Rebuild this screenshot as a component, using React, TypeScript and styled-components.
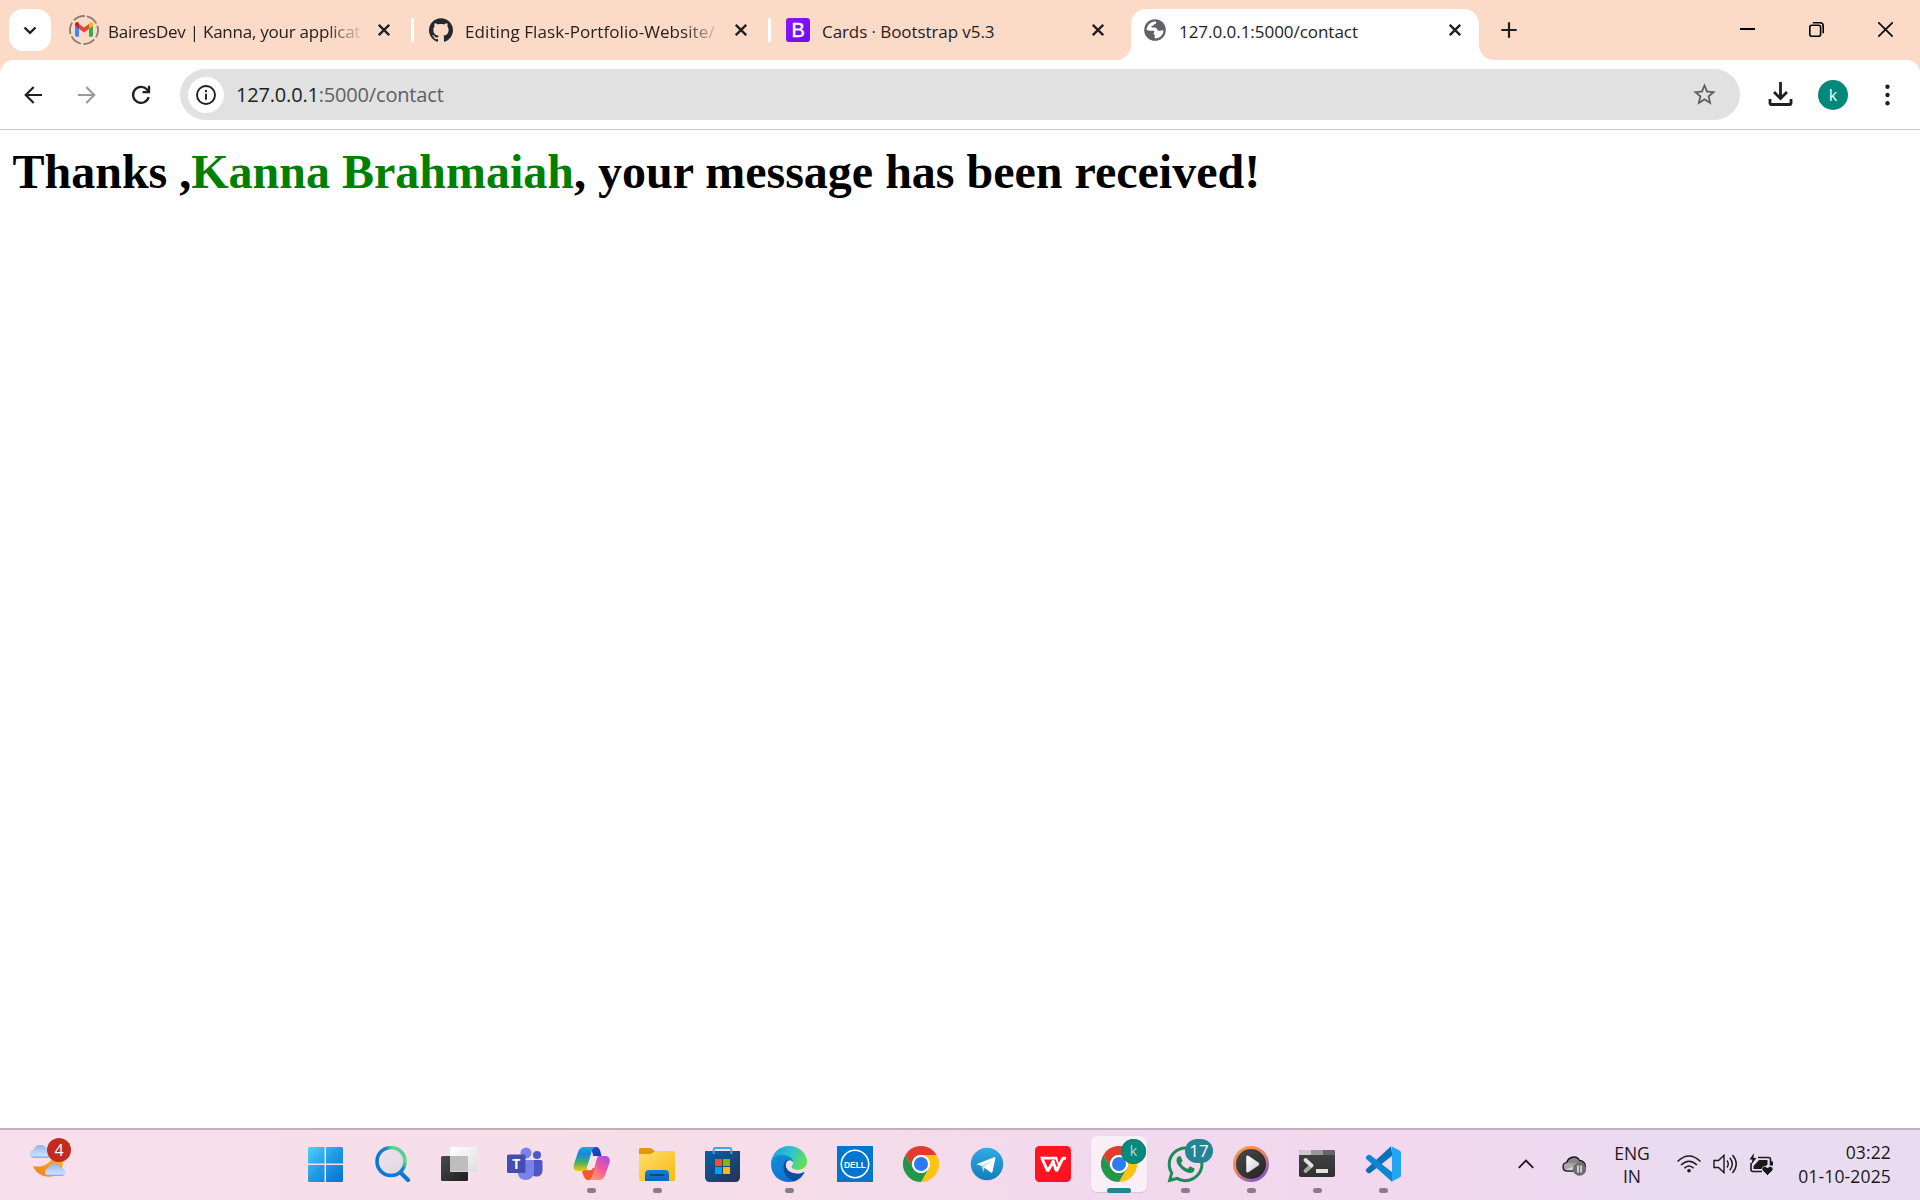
import React from 'react';
import styled, { createGlobalStyle } from 'styled-components';
import { SiGithub } from 'react-icons/si';
import { MdStarBorder } from 'react-icons/md';
import { FaWhatsapp } from 'react-icons/fa';

const UI_FONT = '"Open Sans", "Noto Sans", sans-serif';

const GlobalStyle = createGlobalStyle`
  * { box-sizing: border-box; }
  html, body { margin: 0; padding: 0; background: #fff; }
  body { overflow: hidden; }
  svg { display: block; flex: none; }
`;

const Screen = styled.div`
  display: flex;
  flex-direction: column;
  width: 1920px;
  height: 1200px;
  background: #fff;
  font-family: ${UI_FONT};
  overflow: hidden;
`;

/* ---------- tab strip ---------- */

const TabStrip = styled.header`
  display: flex;
  align-items: flex-end;
  flex: none;
  height: 60px;
  padding-left: 9px;
  background: #fcdac8;
`;

const TabSearch = styled.button`
  display: flex;
  align-items: center;
  justify-content: center;
  width: 42px;
  height: 42px;
  margin: 0 3px 9px 0;
  padding: 0;
  border: 0;
  border-radius: 14px;
  background: #fff;
`;

const TabItem = styled.div<{ $active?: boolean }>`
  position: relative;
  display: flex;
  align-items: center;
  flex: none;
  height: 51px;
  width: ${(p) => (p.$active ? 348 : 357)}px;
  margin: ${(p) => (p.$active ? '0 6px' : '0')};
  padding-left: ${(p) => (p.$active ? 9 : 15)}px;
  padding-bottom: 9px;
  border-radius: 15px 15px 0 0;
  background: ${(p) => (p.$active ? '#fff' : 'transparent')};

  &::before,
  &::after {
    content: '';
    display: ${(p) => (p.$active ? 'block' : 'none')};
    position: absolute;
    bottom: 0;
    width: 15px;
    height: 15px;
  }
  &::before {
    left: -15px;
    background: radial-gradient(circle at 0 0, transparent 14.5px, #fff 15.5px);
  }
  &::after {
    right: -15px;
    background: radial-gradient(circle at 100% 0, transparent 14.5px, #fff 15.5px);
  }
`;

const TabDivider = styled.span`
  width: 3px;
  height: 24px;
  margin-left: -15px;
  margin-right: 12px;
  background: #fff;
`;

const Favicon = styled.span`
  display: flex;
  align-items: center;
  justify-content: center;
  flex: none;
  width: 30px;
  height: 30px;
  margin-right: 9px;
`;

const TabTitle = styled.span<{ $fade?: boolean; $spacing: number }>`
  width: 252px;
  padding-top: 3px;
  white-space: nowrap;
  font-size: 17px;
  line-height: 26px;
  letter-spacing: ${(p) => p.$spacing}px;
  color: #25211f;
  mask-image: ${(p) => (p.$fade ? 'linear-gradient(90deg, #000 218px, transparent 256px)' : 'none')};
`;

const TabClose = styled.span`
  display: flex;
  justify-content: center;
  width: 18px;
  margin-left: 15px;
`;

const NewTab = styled.span`
  display: flex;
  margin: 0 0 22px 16px;
`;

const WindowControls = styled.div`
  display: flex;
  align-items: center;
  align-self: flex-start;
  gap: 54px;
  height: 59px;
  margin-left: auto;
  padding-right: 27px;
`;

/* ---------- toolbar ---------- */

const ToolbarBacking = styled.div`
  flex: none;
  background: #fcdac8;
`;

const Toolbar = styled.nav`
  display: flex;
  align-items: center;
  height: 70px;
  padding-left: 20px;
  border-radius: 14px 14px 0 0;
  border-bottom: 1px solid #c8c8c8;
  background: #fff;
`;

const NavButton = styled.span`
  display: flex;
  justify-content: center;
  width: 26px;
  margin-right: 28px;
`;

const AddressBar = styled.div`
  display: flex;
  align-items: center;
  width: 1560px;
  height: 51px;
  margin-left: -2px;
  padding: 0 22px 0 8px;
  border-radius: 26px;
  background: #e1e1e1;
`;

const SiteInfo = styled.span`
  display: flex;
  align-items: center;
  justify-content: center;
  width: 36px;
  height: 36px;
  margin-right: 12px;
  border-radius: 50%;
  background: #fff;
`;

const Url = styled.span`
  flex: 1;
  padding-top: 1px;
  font-size: 20px;
  line-height: 28px;
  letter-spacing: -0.18px;
  color: #5f6062;
`;

const UrlHost = styled.span`
  color: #202124;
`;

const ToolbarActions = styled.div`
  display: flex;
  align-items: center;
  margin-left: 27.5px;
`;

const Avatar = styled.span`
  display: flex;
  align-items: center;
  justify-content: center;
  width: 30px;
  height: 30px;
  margin: 0 36.5px 0 25.5px;
  border-radius: 50%;
  background: #00897b;
  color: #fff;
  font-size: 16px;
  line-height: 30px;
`;

/* ---------- page ---------- */

const Page = styled.main`
  flex: 1;
  padding: 12px;
  background: #fff;
`;

const Message = styled.h1`
  margin: 3px 0 0 0.5px;
  font-family: "Liberation Serif", "Times New Roman", serif;
  font-size: 48px;
  font-weight: 700;
  line-height: 54px;
  white-space: nowrap;
  color: #000;
`;

const Sender = styled.span`
  color: #008000;
`;

/* ---------- taskbar ---------- */

const Taskbar = styled.footer`
  display: flex;
  flex: none;
  height: 72px;
  border-top: 2px solid #c0b0bb;
  background: linear-gradient(90deg, #f7dfec 0%, #f6dfe9 28%, #f6dde9 42%, #f1d9ee 58%, #f1d8ee 74%, #e9dbf0 88%, #e9dcf0 100%);
`;

const Weather = styled.div`
  position: relative;
  width: 294px;
  padding: 15px 0 0 30px;
`;

const WeatherBadge = styled.span`
  position: absolute;
  left: 47px;
  top: 8px;
  width: 24px;
  height: 24px;
  border-radius: 50%;
  background: #c42b1c;
  color: #fff;
  font-size: 16px;
  line-height: 24px;
  text-align: center;
`;

const Apps = styled.div`
  display: flex;
`;

const AppSlot = styled.div`
  display: flex;
  justify-content: center;
  width: 66px;
  padding-top: 6px;
`;

const AppButton = styled.div<{ $active?: boolean }>`
  position: relative;
  display: flex;
  flex-direction: column;
  align-items: center;
  width: 56px;
  height: 56px;
  padding-top: 10px;
  border-radius: 6px;
  background: ${(p) => (p.$active ? '#faeef7' : 'transparent')};
  box-shadow: ${(p) => (p.$active ? '0 1px 1px 0 #d9c4d6, 0 0 1px #e2cfdf' : 'none')};
`;

const Running = styled.span<{ $active?: boolean }>`
  flex: none;
  width: ${(p) => (p.$active ? 24 : 9)}px;
  height: 5px;
  margin-top: 6px;
  border-radius: 3px;
  background: ${(p) => (p.$active ? '#258494' : '#8c7b88')};
`;

const AppBadge = styled.span<{ $wide?: boolean }>`
  position: absolute;
  left: ${(p) => (p.$wide ? 28 : 30)}px;
  top: 3px;
  width: ${(p) => (p.$wide ? 28 : 25)}px;
  height: ${(p) => (p.$wide ? 24 : 25)}px;
  border-radius: 13px;
  background: ${(p) => (p.$wide ? '#258494' : '#07897b')};
  box-shadow: ${(p) => (p.$wide ? 'none' : 'inset 0 0 0 1px #1b7a70')};
  color: ${(p) => (p.$wide ? '#fff' : '#b6dcd6')};
  font-size: ${(p) => (p.$wide ? 17 : 14)}px;
  line-height: 24px;
  text-align: center;
`;

const Tray = styled.div`
  display: flex;
  align-items: center;
  margin-left: auto;
  padding: 0 29px 2px 0;
  color: #1b181b;
  font-size: 17.5px;
`;

const Language = styled.div`
  width: 60px;
  margin: 1px 0 0 15px;
  line-height: 23px;
  text-align: center;
`;

const Status = styled.div`
  display: flex;
  align-items: center;
  gap: 12px;
  margin-left: 15px;
`;

const Clock = styled.div`
  width: 117px;
  margin-top: -1px;
  line-height: 24px;
  letter-spacing: 0.15px;
  text-align: right;
  white-space: nowrap;
`;

/* ---------- drawings ---------- */

const CloseIcon = () => (
  <svg width="12" height="12" viewBox="0 0 12 12" stroke="#1f1f1f" strokeWidth="2.3">
    <path d="M.8.8 11.2 11.2M11.2.8.8 11.2" />
  </svg>
);

const GmailIcon = () => (
  <svg width="30" height="30" viewBox="0 0 30 30" fill="none">
    <circle cx="15" cy="15" r="14" stroke="#8d7d76" strokeWidth="1.8" strokeDasharray="12 2.66" transform="rotate(-78 15 15)" />
    <path d="M6 11v9.3c0 .9.6 1.5 1.5 1.5H10v-9z" fill="#4285f4" />
    <path d="M24 11v9.3c0 .9-.6 1.5-1.5 1.5H20v-9z" fill="#34a853" />
    <path d="M20 8.9v4.9l4-3V9.2c0-2-2.200-2.700-3.500-1.700z" fill="#fbbc04" />
    <path d="m10 13.800 5 3.700 5-3.700V8.900l-5 3.700-5-3.700z" fill="#ea4335" />
    <path d="M6 9.200v1.600l4 3V8.900l-.5-1.400C8.200 6.500 6 7.200 6 9.200z" fill="#c5221f" />
  </svg>
);

const GlobeIcon = () => (
  <svg width="22" height="22" viewBox="0 0 22 22">
    <circle cx="11" cy="11" r="10.800" fill="#5f6368" />
    <path d="M2.600 10.500C3 6.500 6 3.200 10.300 2.500c1.700-.1 2.200.5 1.900 1.500-.3 1.200-2.400 1-2.600 2.100-.2 1-2.300.6-2.300 1.700 0 1.200 2.700.4 4.400.9 1.500.5 1.300 2.600 2.700 3 1.700.4 3-.6 5-.5.1 4.500-3.500 8-8 8.300-1.200-.2-.8-1.600-.5-2.400.4-1.200-1.100-1.100-1.300-2.300-.2-1.300 1.200-1.500.8-2.500C9.800 11 5 13 2.600 10.500z" fill="#fff" />
  </svg>
);

const BootstrapIcon = () => (
  <svg width="24" height="24" viewBox="0 0 24 24">
    <defs>
      <linearGradient id="bs" x2="1" y2="1"><stop stopColor="#9013fe" /><stop offset="1" stopColor="#6610f2" /></linearGradient>
    </defs>
    <rect width="24" height="24" rx="3" fill="url(#bs)" />
    <text x="12.200" y="19.200" textAnchor="middle" fontFamily="Liberation Sans, sans-serif" fontSize="20" fill="#fff" stroke="#fff" strokeWidth=".4">B</text>
  </svg>
);

const WeatherIcon = () => (
  <svg width="38" height="36" viewBox="0 0 38 36">
    <defs>
      <linearGradient id="cl" x2="0" y2="1"><stop stopColor="#8fb4ee" /><stop offset=".6" stopColor="#bcd5f7" /><stop offset=".85" stopColor="#c9defa" /><stop offset="1" stopColor="#6f9be2" /></linearGradient>
      <linearGradient id="mo" x1="1" x2="0" y2="1"><stop stopColor="#f8b62c" /><stop offset="1" stopColor="#ee7d1b" /></linearGradient>
    </defs>
    <path d="M3 21c8 2 16-1 20-9h9c2 7 0 14-5 18-9 4-20 1-24-9z" fill="url(#mo)" />
    <path d="M4 13c-5 0-5-7 0-8C6-1 14-2 17 4c5 0 7 9 1 9z" transform="translate(-.5 -.3)" fill="url(#cl)" />
    <path d="M19 31c-5 0-5-7-.5-8 2-6 10-6 12 0 6 0 7 8 1 8z" fill="url(#cl)" />
  </svg>
);

const WindowsIcon = () => (
  <svg width="36" height="36" viewBox="0 0 36 36" overflow="visible">
    <defs>
      <linearGradient id="win" gradientUnits="userSpaceOnUse" x1="0" y1="0" x2="36" y2="36"><stop stopColor="#50d2ff" /><stop offset=".5" stopColor="#1f9be4" /><stop offset="1" stopColor="#0370cf" /></linearGradient>
    </defs>
    <path fill="url(#win)" transform="translate(-1.500 0)" d="M2 1h15v16.500H.500V2.500Q.500 1 2 1zM18.500 1H34q1.500 0 1.500 1.500v15h-17zM.500 19H17v17H2Q.500 36 .500 34.500zM18.500 19h17v15.500q0 1.500-1.500 1.500H18.500z" />
  </svg>
);

const SearchIcon = () => (
  <svg width="36" height="36" viewBox="0 0 36 36" fill="none">
    <defs>
      <linearGradient id="se" x1=".2" y1=".7" x2=".9" y2=".1"><stop stopColor="#0a78d6" /><stop offset=".55" stopColor="#0f84d4" /><stop offset=".8" stopColor="#5bdc7f" /><stop offset="1" stopColor="#4cc9a0" /></linearGradient>
      <linearGradient id="sf" x2="1" y2="1"><stop stopColor="#f3e3ee" /><stop offset="1" stopColor="#ded6de" /></linearGradient>
    </defs>
    <path d="m26 27 7 7" stroke="#0d78d4" strokeWidth="4.200" strokeLinecap="round" />
    <circle cx="16" cy="15.500" r="14" fill="url(#sf)" stroke="url(#se)" strokeWidth="3.600" />
  </svg>
);

const TaskViewIcon = () => (
  <svg width="36" height="36" viewBox="0 0 36 36">
    <defs>
      <linearGradient id="tv" x2="1" y2="1"><stop stopColor="#4b4b49" /><stop offset="1" stopColor="#1f1f1f" /></linearGradient>
      <linearGradient id="tw" x2="1" y2="1"><stop stopColor="#fff" /><stop offset="1" stopColor="#dedede" /></linearGradient>
    </defs>
    <rect x="0" y="10" width="27" height="25" rx="1.500" fill="url(#tv)" />
    <rect x="9" y="1" width="27" height="25" rx="1.500" fill="url(#tw)" />
    <path d="M9 10h18v15.500H10.500Q9 25.500 9 24z" fill="#bdbdbd" />
  </svg>
);

const TeamsIcon = () => (
  <svg width="36" height="36" viewBox="0 0 36 36">
    <circle cx="30" cy="9" r="4" fill="#5059c9" />
    <path d="M25 14h9q1.500 0 1.500 1.500V24c0 7-7 8-10 5z" fill="#4f57c6" />
    <circle cx="19" cy="7" r="5.500" fill="#7b83eb" />
    <path d="M11 14h14.500q1.500 0 1.500 1.500V26c0 5-4 8-8.500 8S11 31 10.500 26z" fill="#7b83eb" />
    <rect x="0" y="8.500" width="18.500" height="18.500" rx="1.500" fill="#454db3" />
    <text x="9.200" y="22.800" textAnchor="middle" fontFamily="Open Sans, sans-serif" fontWeight="700" fontSize="14" fill="#fff">T</text>
  </svg>
);

const CopilotIcon = () => (
  <svg width="37" height="36" viewBox="0 0 37 36">
    <defs>
      <linearGradient id="ca" x2="0" y2="1"><stop stopColor="#17a8e8" /><stop offset=".3" stopColor="#1787dc" /><stop offset=".62" stopColor="#3fae6c" /><stop offset="1" stopColor="#f3c80a" /></linearGradient>
      <linearGradient id="cb" x1="1" x2=".3" y2="1"><stop stopColor="#a04cf0" /><stop offset=".5" stopColor="#f0559b" /><stop offset="1" stopColor="#fb9a72" /></linearGradient>
      <linearGradient id="cc" x2="1" y2="1"><stop stopColor="#1a4fcf" /><stop offset="1" stopColor="#0b3bc0" /></linearGradient>
    </defs>
    <path d="M17 1h6c4 0 4.500 5 5.500 9l-8 1c-1-4-2-8-3.500-10z" fill="url(#cc)" />
    <path d="M9 25c1.500 4 2 8.500 6 9h6l4-11-8-2z" fill="#f4562d" />
    <path d="M11 1h12c-3 0-4 3-5 7l-4 13c-1.200 4-3 4-6 4H5c-4 0-5-3-4-7L5 6c1-3.500 3-5 6-5z" fill="url(#ca)" />
    <path d="M26 34H15c3 0 4-3 5-7l3.500-13c1-4 3-4 6-4H32c4 0 5.500 3 4.500 7l-4.500 12c-1 3.500-3 5-6 5z" fill="url(#cb)" />
    <path d="M17.800 12.200Q18.600 10 20.500 10h4.300q-1.600.8-2.200 3l-2.700 9Q19.200 24.200 17 24.200h-4.300q1.500-1 2.200-3z" fill="#f8e4ed" />
  </svg>
);

const FolderIcon = () => (
  <svg width="36" height="36" viewBox="0 0 36 36">
    <defs>
      <linearGradient id="fo" x2="1" y2="1"><stop stopColor="#ffdf71" /><stop offset="1" stopColor="#f9b90e" /></linearGradient>
      <linearGradient id="fb" x2="0" y2="1"><stop stopColor="#1180d4" /><stop offset="1" stopColor="#0a66bd" /></linearGradient>
    </defs>
    <path d="M0 3.500Q0 2 1.500 2H11q1 0 2 1l3 2v5H0z" fill="#dd9a06" />
    <path d="M0 8h11q1.500 0 2.500-1L16 5h18.500Q36 5 36 6.500v27q0 1.500-1.500 1.500h-33Q0 35 0 33.500z" fill="url(#fo)" />
    <path d="M6 35v-7q0-4 4-4h16q4 0 4 4v7z" fill="url(#fb)" />
    <rect x="10.500" y="28" width="15" height="2" rx="1" fill="#0c4584" />
  </svg>
);

const StoreIcon = () => (
  <svg width="36" height="36" viewBox="0 0 36 36">
    <defs>
      <linearGradient id="st" x2="1" y2="1"><stop stopColor="#0460ae" /><stop offset="1" stopColor="#29324f" /></linearGradient>
    </defs>
    <path d="M0 5h35v26q0 5-5 5H5q-5 0-5-5z" fill="url(#st)" />
    <path d="M8.700 8V3.500q0-1.500 1.500-1.500h14.600q1.500 0 1.500 1.500V8" fill="none" stroke="#27b1ee" strokeWidth="1.900" />
    <path fill="#f25022" d="M10 13h7v7h-7z" /><path fill="#7fba00" d="M18 13h7v7h-7z" />
    <path fill="#00a4ef" d="M10 21h7v7h-7z" /><path fill="#ffb900" d="M18 21h7v7h-7z" />
  </svg>
);

const EdgeIcon = () => (
  <svg width="36" height="36" viewBox="0 0 36 36">
    <defs>
      <linearGradient id="ea" x1="0" y1=".2" x2="1" y2=".6"><stop stopColor="#1d9fe0" /><stop offset=".5" stopColor="#2fc4cf" /><stop offset="1" stopColor="#67e04c" /></linearGradient>
      <linearGradient id="eb" x1="0" x2=".6" y2="1"><stop stopColor="#1190d8" /><stop offset="1" stopColor="#0f6fd2" /></linearGradient>
    </defs>
    <path d="M0 18C0 8 8 0 18 0s18 7.500 18 15.500c0 5.500-4 8.500-9 8.500-4 0-6.500-1.500-6.500-3l-8-8z" fill="url(#ea)" />
    <path d="M0 18C1 11 7 8 12.500 9c5 .500 9 3 9.500 6.500-5-3-9 1-8 5 1 5 9 9 15 7 2-.5 3.500-1.500 4.300-1C30 33 24 36 18 36 8 36 0 29 0 18z" fill="url(#eb)" />
    <path d="M14.500 14.500c-5 8 0 18 8.500 21 4.500-1.500 8-4.500 10.300-9 .3-1-.3-1-1-.6-5 2.500-12 1.500-15.300-1.900-2.500-3-2.300-6 .5-9.500z" fill="#0d4f9a" />
    <path d="M16.500 15c3-1.500 6 0 5.500 2.800-.4 1.700-1.800 2-1.400 3.400.6 1.800 3.500 2.800 6.400 2.800 2.800 0 5-.8 6.800-2.300-.4 2-.5 3-1 4.300-4.300 2.700-12.300 1.700-15.800-2-2.500-3-3-6.500-.5-9z" fill="#f5dcea" />
  </svg>
);

const DellIcon = () => (
  <svg width="36" height="36" viewBox="0 0 36 36">
    <rect width="36" height="36" fill="#0076ce" />
    <circle cx="18" cy="18" r="13.700" fill="none" stroke="#fff" strokeWidth="1.600" />
    <text x="18" y="21.500" textAnchor="middle" textLength="22" lengthAdjust="spacingAndGlyphs" fontFamily="Liberation Sans, sans-serif" fontWeight="700" fontSize="9.500" fill="#fff">DELL</text>
  </svg>
);

const ChromeIcon = () => (
  <svg width="36" height="36" viewBox="0 0 36 36">
    <path d="M2.400 9A18 18 0 0 1 33.600 9H18a9 9 0 0 0-7.800 13.500z" fill="#e33b2e" />
    <path d="M33.600 9A18 18 0 0 1 18 36l7.800-13.500A9 9 0 0 0 18 9z" fill="#fdc313" />
    <path d="M18 36A18 18 0 0 1 2.400 9l7.800 13.500A9 9 0 0 0 25.800 22.500z" fill="#23964a" />
    <circle cx="18" cy="18" r="9" fill="#fff" />
    <circle cx="18" cy="18" r="7" fill="#2d7bf0" />
  </svg>
);

const TelegramIcon = () => (
  <svg width="36" height="36" viewBox="0 0 36 36">
    <defs><linearGradient id="te" x2="0" y2="1"><stop stopColor="#33a8e2" /><stop offset="1" stopColor="#1180bd" /></linearGradient></defs>
    <circle cx="18" cy="18" r="16.200" fill="url(#te)" />
    <path d="M7.500 18.200 25 11.300c1-.3 1.500.2 1.300 1.300l-2.800 13.100c-.2 1-.9 1.200-1.700.8L12.500 19.800z" fill="#fff" />
    <path d="m12.500 20 10-5.500-7.200 7.500-.7 4.500z" fill="#b8dcef" />
    <path d="m15.300 21.700 7.200-7.200-8 6.500 6.500 5z" fill="#fff" />
  </svg>
);

const WpsIcon = () => (
  <svg width="36" height="36" viewBox="0 0 36 36" fill="none">
    <rect width="36" height="36" rx="4.500" fill="#ff1420" />
    <path d="M5 10.800h17l1 2.700H6.300z" fill="#fff" />
    <path d="M7 12.500 12.700 25 19 14.500" stroke="#fff" strokeWidth="3" strokeLinejoin="bevel" />
    <path d="M17.500 14.500 21.500 25 27.800 12.300H31" stroke="#fff" strokeWidth="3" strokeLinejoin="bevel" />
    <path d="m21 12 2.500 6.500" stroke="#fff" strokeWidth="1.800" />
  </svg>
);

const PlayerIcon = () => (
  <svg width="36" height="36" viewBox="0 0 36 36">
    <defs>
      <linearGradient id="pa" x1=".1" x2=".8" y2="1"><stop stopColor="#fd9a3d" /><stop offset=".45" stopColor="#e58a63" /><stop offset="1" stopColor="#7b4fd0" /></linearGradient>
      <linearGradient id="pb" x2="1" y2="1"><stop stopColor="#4a4a4a" /><stop offset="1" stopColor="#232323" /></linearGradient>
      <linearGradient id="pc" x2="1" y2="1"><stop stopColor="#fff" /><stop offset="1" stopColor="#cfcfcf" /></linearGradient>
    </defs>
    <circle cx="18" cy="18" r="18" fill="url(#pa)" />
    <circle cx="18" cy="18" r="15" fill="url(#pb)" />
    <path d="M14 11v14q0 1 1 .5l10-6.700q1-.8 0-1.600L15 10.500q-1-.5-1 .5z" fill="url(#pc)" stroke="url(#pc)" strokeWidth="1.500" />
  </svg>
);

const TerminalIcon = () => (
  <svg width="36" height="36" viewBox="0 0 36 36" fill="none">
    <defs><linearGradient id="tm" x2="0" y2="1"><stop stopColor="#454545" /><stop offset="1" stopColor="#303030" /></linearGradient></defs>
    <rect y="4" width="36" height="27" rx="1.800" fill="url(#tm)" />
    <path d="M0 9V5.500Q0 4 1.500 4H12v5z" fill="#cbcbcb" /><path d="M12 4h12v5H12z" fill="#989898" /><path d="M24 4h10.500Q36 4 36 5.500V9H24z" fill="#666" />
    <path d="m12.500 19.500-6 5.500" stroke="#a6a6a6" strokeWidth="3.800" strokeLinecap="round" />
    <path d="m6.500 14 6 5.500" stroke="#e3e3e3" strokeWidth="3.800" strokeLinecap="round" />
    <rect x="17" y="23" width="12" height="4" fill="#e2e2e2" />
  </svg>
);

const CodeIcon = () => (
  <svg width="36" height="36" viewBox="0 0 36 36">
    <path d="M26 .300 1.300 23q-1.300 1.300 0 2.600l1.500 1.300q1.200.8 2.400 0L27.500 9.500z" fill="#0a71b9" />
    <path d="M27 35.700 1.300 13q-1.300-1.300 0-2.600l1.500-1.300q1.200-.8 2.400 0L27.500 26.500z" fill="#0e86d2" />
    <path d="m26.500.200 8 4.200Q36 5.200 36 6.500v23q0 1.300-1.500 2.100l-8 4.200.500-1V1.200z" fill="#24a5f2" />
  </svg>
);

const CloudIcon = () => (
  <svg width="25" height="23" viewBox="0 0 25 23">
    <path d="M5.500 17C0 17-.5 9.500 4.800 8.500 6 3 14.500.500 17.500 6.500 24 6.500 26 17 19 17z" fill="#878787" stroke="#1b181b" strokeWidth="1.500" />
    <path d="M2 13.500 14 9l5 4v3.300H5Q2.500 16 2 13.500z" fill="#d6d2d8" />
    <path d="M5 8.800q5-.8 8.500 2.700L4 15.500Q.8 14 2 10.500z" fill="#aaa8aa" />
    <circle cx="17.500" cy="15" r="6.700" fill="#6f6f6f" />
    <path d="M16 11.500v7M19 11.500v7" stroke="#fff" strokeWidth="1.300" />
  </svg>
);

const CloudSlot = styled.span`
  display: flex;
  margin: 2px 0 0 28px;
`;

/* ---------- data ---------- */

const tabs = [
  { title: 'BairesDev | Kanna, your applicat', icon: <GmailIcon />, fade: true, spacing: -0.24 },
  { title: 'Editing Flask-Portfolio-Website/', icon: <SiGithub size={24} color="#24292f" />, fade: true, divider: true, spacing: 0.08 },
  { title: 'Cards · Bootstrap v5.3', icon: <BootstrapIcon />, divider: true, spacing: -0.08 },
  { title: '127.0.0.1:5000/contact', icon: <GlobeIcon />, active: true, spacing: -0.04 },
];

const apps: { icon: React.ReactNode; running?: boolean; active?: boolean; badge?: string }[] = [
  { icon: <WindowsIcon /> },
  { icon: <SearchIcon /> },
  { icon: <TaskViewIcon /> },
  { icon: <TeamsIcon /> },
  { icon: <CopilotIcon />, running: true },
  { icon: <FolderIcon />, running: true },
  { icon: <StoreIcon /> },
  { icon: <EdgeIcon />, running: true },
  { icon: <DellIcon /> },
  { icon: <ChromeIcon /> },
  { icon: <TelegramIcon /> },
  { icon: <WpsIcon /> },
  { icon: <ChromeIcon />, running: true, active: true, badge: 'k' },
  { icon: <FaWhatsapp size={41} color="#1c8c57" style={{ margin: '-2.5px' }} />, running: true, badge: '17' },
  { icon: <PlayerIcon />, running: true },
  { icon: <TerminalIcon />, running: true },
  { icon: <CodeIcon />, running: true },
];

export default function App() {
  return (
    <Screen>
      <GlobalStyle />
      <TabStrip>
        <TabSearch>
          <svg width="14" height="9" viewBox="0 0 14 9" fill="none" stroke="#1f1f1f" strokeWidth="2.300"><path d="m1.500 1.500 5.500 5.300 5.500-5.300" /></svg>
        </TabSearch>
        {tabs.map((t) => (
          <TabItem key={t.title} $active={t.active}>
            {t.divider && <TabDivider />}
            <Favicon>{t.icon}</Favicon>
            <TabTitle $fade={t.fade} $spacing={t.spacing}>{t.title}</TabTitle>
            <TabClose><CloseIcon /></TabClose>
          </TabItem>
        ))}
        <NewTab>
          <svg width="16" height="16" viewBox="0 0 16 16" stroke="#1f1f1f" strokeWidth="2.200"><path d="M8 .300v15.400M.300 8h15.400" /></svg>
        </NewTab>
        <WindowControls>
          <svg width="15" height="15" viewBox="0 0 15 15"><path d="M0 6h15v2H0z" /></svg>
          <svg width="15" height="15" viewBox="0 0 15 15" fill="none" stroke="#000" strokeWidth="1.600">
            <rect x=".8" y="3.300" width="10.800" height="10.900" rx="2" /><path d="M3.800.8H11q3.200 0 3.200 3.200v7.300" />
          </svg>
          <svg width="15" height="15" viewBox="0 0 15 15" stroke="#000" strokeWidth="1.600"><path d="m.3.300 14.400 14.400M14.700.300.300 14.700" /></svg>
        </WindowControls>
      </TabStrip>

      <ToolbarBacking>
        <Toolbar>
          <NavButton>
            <svg width="18" height="18" viewBox="0 0 18 18" fill="none" stroke="#1f1f1f" strokeWidth="2.100"><path d="M18 9H2M9.700 1 1.700 9l8 8" /></svg>
          </NavButton>
          <NavButton>
            <svg width="18" height="18" viewBox="0 0 18 18" fill="none" stroke="#9b9b9b" strokeWidth="2.100"><path d="M0 9h16M8.300 1l8 8-8 8" /></svg>
          </NavButton>
          <NavButton>
            <svg width="20" height="20" viewBox="0 0 20 20" fill="none" stroke="#1f1f1f" strokeWidth="2.300">
              <path d="M17.700 12.200A8 8 0 1 1 16 4.500l2 2.300" /><path d="M18 .800v6.400h-6.500" />
            </svg>
          </NavButton>
          <AddressBar>
            <SiteInfo>
              <svg width="20" height="20" viewBox="0 0 20 20" fill="none" stroke="#1f1f1f" strokeWidth="1.900"><circle cx="10" cy="10" r="9" /><path d="M10 8.800v6M10 5v2.200" /></svg>
            </SiteInfo>
            <Url><UrlHost>127.0.0.1</UrlHost>:5000/contact</Url>
            <MdStarBorder size={27} color="#5f6062" />
          </AddressBar>
          <ToolbarActions>
            <svg width="25" height="25" viewBox="0 0 25 25" fill="none" stroke="#1f1f1f" strokeWidth="2.800">
              <path d="M12.500 0v16M6 10l6.500 6.500L19 10M2 17v4.500q0 1 1 1h19q1 0 1-1V17" />
            </svg>
            <Avatar>k</Avatar>
            <svg width="5" height="22" viewBox="0 0 5 22" fill="#1f1f1f"><circle cx="2.500" cy="2.700" r="2.200" /><circle cx="2.500" cy="11" r="2.200" /><circle cx="2.500" cy="19.200" r="2.200" /></svg>
          </ToolbarActions>
        </Toolbar>
      </ToolbarBacking>

      <Page>
        <Message>Thanks ,<Sender>Kanna Brahmaiah</Sender>, your message has been received!</Message>
      </Page>

      <Taskbar>
        <Weather><WeatherIcon /><WeatherBadge>4</WeatherBadge></Weather>
        <Apps>
          {apps.map((a, i) => (
            <AppSlot key={i}>
              <AppButton $active={a.active}>
                {a.icon}
                {a.badge && <AppBadge $wide={a.badge.length > 1}>{a.badge}</AppBadge>}
                {a.running && <Running $active={a.active} />}
              </AppButton>
            </AppSlot>
          ))}
        </Apps>
        <Tray>
          <svg width="16" height="10" viewBox="0 0 16 10" fill="none" stroke="#1b181b" strokeWidth="1.800"><path d="m.8 8.800 7.200-7.300 7.200 7.300" /></svg>
          <CloudSlot><CloudIcon /></CloudSlot>
          <Language>ENG<br />IN</Language>
          <Status>
            <svg width="24" height="18" viewBox="0 0 24 18" fill="none" stroke="#1b181b" strokeWidth="1.500">
              <path d="M.5 6.500q11.500-11 23 0M4 10q8-7.500 16 0M7.300 13.300q4.700-4.500 9.400 0" /><circle cx="12" cy="15.700" r="1.800" fill="#1b181b" stroke="none" />
            </svg>
            <svg width="24" height="20" viewBox="0 0 24 20" fill="none" stroke="#1b181b" strokeWidth="1.400">
              <path d="M1 6.500h4.500L11 1.300v17.400l-5.500-5.200H1zM14 6.500q2.500 3.500 0 7M16.800 3.800q5 6.200 0 12.400M19.500 1q7.500 9 0 18" />
            </svg>
            <svg width="25" height="23" viewBox="0 0 25 23" fill="none">
              <path d="M9 4.500h10.500q2 0 2 2v6M2 10v6.500q0 2 2 2h9" stroke="#1b181b" strokeWidth="1.600" />
              <path d="M10 7h8.500v4.500l-5.500 4.500H4.500v-3z" fill="#1b181b" /><path d="M22 8.500h2v4h-2z" fill="#1b181b" />
              <path d="M5 0 .5 6.500h3L2 12l5.500-7h-3z" fill="#1b181b" />
              <path d="m18.500 22.500-5-5c-2-3 2.500-6 5-2.500 2.500-3.500 7-.5 5 2.500z" fill="#1b181b" stroke="#e9dbf0" strokeWidth=".8" />
            </svg>
          </Status>
          <Clock>03:22<br />01-10-2025</Clock>
        </Tray>
      </Taskbar>
    </Screen>
  );
}
